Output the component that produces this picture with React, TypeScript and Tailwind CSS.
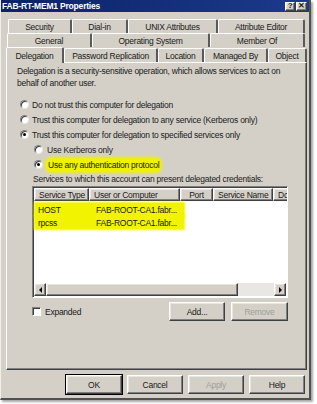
import React from 'react';

const raised =
  'border border-t-white border-l-white border-r-[#404040] border-b-[#404040] shadow-[inset_-1px_-1px_0_#808080,inset_1px_1px_0_#e8e6e1]';

const Radio: React.FC<{ checked?: boolean }> = ({ checked }) => (
  <span className="w-[9px] h-[9px] rounded-full bg-white border border-t-[#808080] border-l-[#808080] border-r-[#e8e6e1] border-b-[#e8e6e1] shadow-[inset_1px_1px_0_#404040] flex items-center justify-center shrink-0">
    {checked && <span className="w-[3px] h-[3px] rounded-full bg-black" />}
  </span>
);

const Tab: React.FC<{ label: string; w: number; active?: boolean }> = ({ label, w, active }) => (
  <div
    style={{ width: w }}
    className={`flex items-center justify-center border-t border-l border-t-white border-l-white border-r-2 border-r-[#5a5a5a] rounded-t-[2px] bg-[#d4d0c8] ${
      active ? 'h-[16px] -mb-px relative z-10' : 'h-[14px]'
    }`}
  >
    {label}
  </div>
);

const Button: React.FC<{ label: string; w: number; disabled?: boolean; def?: boolean }> = ({ label, w, disabled, def }) => (
  <div
    style={{ width: w }}
    className={`h-[19px] flex items-center justify-center bg-[#d4d0c8] ${raised} ${
      def ? 'outline outline-1 outline-black' : ''
    } ${disabled ? 'text-[#a09d98]' : ''}`}
  >
    {label}
  </div>
);

export default function App() {
  return (
    <div className="w-[317px] h-[404px] bg-white font-['Liberation_Sans',Arial,sans-serif] text-[8.5px] leading-[12px] text-[#1a1a1a] tracking-[-0.25px]">
      <div className="w-[311px] h-[400px] bg-[#d4d0c8] border-l border-l-[#f0efec] border-r-2 border-r-[#505050] border-b-2 border-b-[#505050] shadow-[2px_2px_2px_rgba(0,0,0,0.35)] flex flex-col">
        {/* title bar */}
        <div className="h-[12px] bg-gradient-to-r from-[#0c2268] to-[#1c3a8c] flex items-center justify-between pl-[1px] pr-[2px]">
          <span className="text-white font-bold text-[8.5px] tracking-[-0.2px]">FAB-RT-MEM1 Properties</span>
          <div className="flex gap-[1px]">
            <span className={`w-[10px] h-[9px] bg-[#d4d0c8] ${raised} flex items-center justify-center font-bold text-[8px] leading-none`}>?</span>
            <span className={`w-[11px] h-[9px] bg-[#d4d0c8] ${raised} flex items-center justify-center font-bold text-[8px] leading-none`}>✕</span>
          </div>
        </div>

        {/* tabs */}
        <div className="mt-[7px] flex flex-col">
          <div className="flex pl-[7px]">
            <Tab label="Security" w={64} />
            <Tab label="Dial-in" w={56} />
            <Tab label="UNIX Attributes" w={90} />
            <Tab label="Attribute Editor" w={87} />
          </div>
          <div className="flex pl-[6px]">
            <Tab label="General" w={85} />
            <Tab label="Operating System" w={118} />
            <Tab label="Member Of" w={95} />
          </div>
          <div className="flex pl-[5px] items-end">
            <Tab label="Delegation" w={58} active />
            <Tab label="Password Replication" w={94} />
            <Tab label="Location" w={46} />
            <Tab label="Managed By" w={64} />
            <Tab label="Object" w={39} />
          </div>
        </div>

        {/* panel */}
        <div className="ml-[5px] mr-[2px] h-[308px] border border-t-white border-l-white border-r-[#404040] border-b-[#404040] shadow-[inset_-1px_-1px_0_#808080] pt-[2px] pl-[10px] pr-[16px] flex flex-col">
          <p>
            Delegation is a security-sensitive operation, which allows services to act on behalf of another user.
          </p>
          <div className="mt-[8px] flex flex-col">
            {[
              { t: 'Do not trust this computer for delegation' },
              { t: 'Trust this computer for delegation to any service (Kerberos only)' },
              { t: 'Trust this computer for delegation to specified services only', c: true },
            ].map((r) => (
              <div key={r.t} className="h-[15px] flex items-center gap-[3px] pl-[3px]">
                <Radio checked={r.c} />
                <span>{r.t}</span>
              </div>
            ))}
            <div className="h-[15px] flex items-center gap-[4px] pl-[17px]">
              <Radio />
              <span>Use Kerberos only</span>
            </div>
            <div className="h-[15px] flex items-center gap-[4px] pl-[17px]">
              <Radio checked />
              <span className="bg-[#f0f200] rounded-[4px] shadow-[0_0_3px_2px_#f0f200] px-[1px]">Use any authentication protocol</span>
            </div>
          </div>

          <p className="mt-[1px] pl-[16px]">Services to which this account can present delegated credentials:</p>

          {/* list view */}
          <div className="ml-[15px] mr-[2px] mt-[1px] h-[112px] bg-white border border-t-[#808080] border-l-[#808080] border-r-white border-b-white shadow-[inset_1px_1px_0_#404040] flex flex-col overflow-hidden">
            <div className="flex h-[13px] mt-[1px] ml-[1px] shrink-0">
              {[
                ['Service Type', 55],
                ['User or Computer', 91],
                ['Port', 33],
                ['Service Name', 60],
                ['Dc', 20],
              ].map(([t, w]) => (
                <div
                  key={t as string}
                  style={{ width: w as number }}
                  className={`shrink-0 bg-[#d4d0c8] ${raised} flex items-center px-[4px] overflow-hidden whitespace-nowrap ${
                    t === 'Port' ? 'justify-center' : ''
                  }`}
                >
                  {t}
                </div>
              ))}
            </div>
            <div className="flex-1 pt-[2px] pl-[2px]">
              {[
                ['HOST', 'FAB-ROOT-CA1.fabr...'],
                ['rpcss', 'FAB-ROOT-CA1.fabr...'],
              ].map(([a, b]) => (
                <div key={a} className="h-[13px] flex items-center">
                  <div className="w-[149px] h-full bg-[#f2f300] shadow-[0_0_2px_1px_#f2f300] flex items-center">
                    <span className="w-[61px] pl-[3px]">{a}</span>
                    <span>{b}</span>
                  </div>
                </div>
              ))}
            </div>
            {/* horizontal scrollbar */}
            <div className="h-[13px] flex bg-[#e9e7e3] shrink-0 mx-[1px] mb-[1px]">
              <div className={`w-[12px] bg-[#d4d0c8] ${raised} flex items-center justify-center`}>
                <span className="w-0 h-0 border-y-[3px] border-y-transparent border-r-[3px] border-r-black" />
              </div>
              <div className={`w-[192px] bg-[#d4d0c8] ${raised}`} />
              <div className="flex-1" />
              <div className={`w-[12px] bg-[#d4d0c8] ${raised} flex items-center justify-center`}>
                <span className="w-0 h-0 border-y-[3px] border-y-transparent border-l-[3px] border-l-black" />
              </div>
            </div>
          </div>

          <div className="mt-[4px] ml-[15px] mr-[2px] flex items-center">
            <span className="w-[9px] h-[9px] bg-white border border-t-[#808080] border-l-[#808080] border-r-white border-b-white shadow-[inset_1px_1px_0_#404040]" />
            <span className="ml-[4px] flex-1">Expanded</span>
            <div className="flex gap-[6px]">
              <Button label="Add..." w={56} />
              <Button label="Remove" w={57} disabled />
            </div>
          </div>
        </div>

        {/* dialog buttons */}
        <div className="mt-[5px] flex justify-end gap-[5px] pr-[4px]">
          <Button label="OK" w={56} def />
          <Button label="Cancel" w={56} />
          <Button label="Apply" w={56} disabled />
          <Button label="Help" w={56} />
        </div>
      </div>
    </div>
  );
}
